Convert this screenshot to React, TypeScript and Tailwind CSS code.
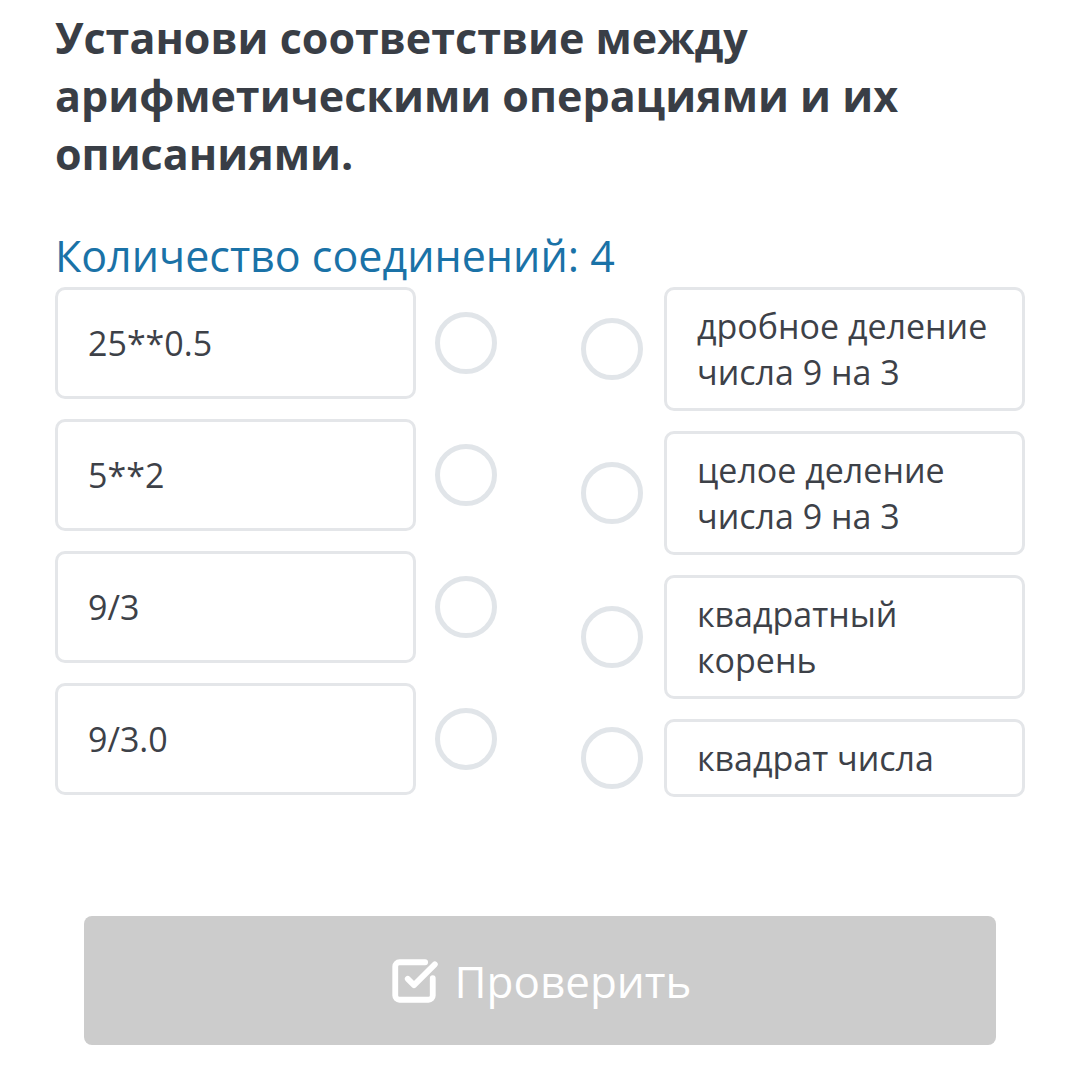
import { SquareCheckBig } from "lucide-react";

const left = ["25**0.5", "5**2", "9/3", "9/3.0"];
const right = [
  "дробное деление числа 9 на 3",
  "целое деление числа 9 на 3",
  "квадратный корень",
  "квадрат числа",
];

function Dot() {
  return <div className="w-[62px] h-[62px] rounded-full border-[5px] border-[#e1e5e9] shrink-0" />;
}

export default function App() {
  return (
    <div className="w-[1080px] h-[1083px] bg-white font-['Open_Sans',sans-serif] text-[#3d4148]">
      <div className="pl-[55px] pr-[55px] pt-[9px]">
        <h1 className="text-[43px] leading-[58px] font-bold text-[#393e46] pr-[80px]">
          Установи соответствие между арифметическими операциями и их описаниями.
        </h1>
        <div className="mt-[48px] text-[43px] leading-[50px] text-[#1a72a7]">
          Количество соединений: 4
        </div>

        <div className="mt-[6px] flex justify-between">
          {/* левые */}
          <div className="flex flex-col gap-[20px]">
            {left.map((t) => (
              <div key={t} className="flex items-center gap-[19px]">
                <div className="w-[361px] h-[112px] flex items-center px-[30px] border-[3px] border-[#e4e6e9] rounded-[10px] text-[34px]">
                  {t}
                </div>
                <Dot />
              </div>
            ))}
          </div>

          {/* правые */}
          <div className="flex flex-col gap-[20px]">
            {right.map((t) => (
              <div key={t} className="flex items-center gap-[21px]">
                <Dot />
                <div className="w-[361px] py-[13px] px-[30px] border-[3px] border-[#e4e6e9] rounded-[10px] text-[34px] leading-[46px]">
                  {t}
                </div>
              </div>
            ))}
          </div>
        </div>
      </div>

      <div className="px-[84px] mt-[119px]">
        <button
          type="button"
          className="w-full h-[129px] rounded-[8px] bg-[#cccccc] text-white flex items-center justify-center gap-[16px] text-[44px]"
        >
          <SquareCheckBig size={50} strokeWidth={2.8} />
          Проверить
        </button>
      </div>
    </div>
  );
}
